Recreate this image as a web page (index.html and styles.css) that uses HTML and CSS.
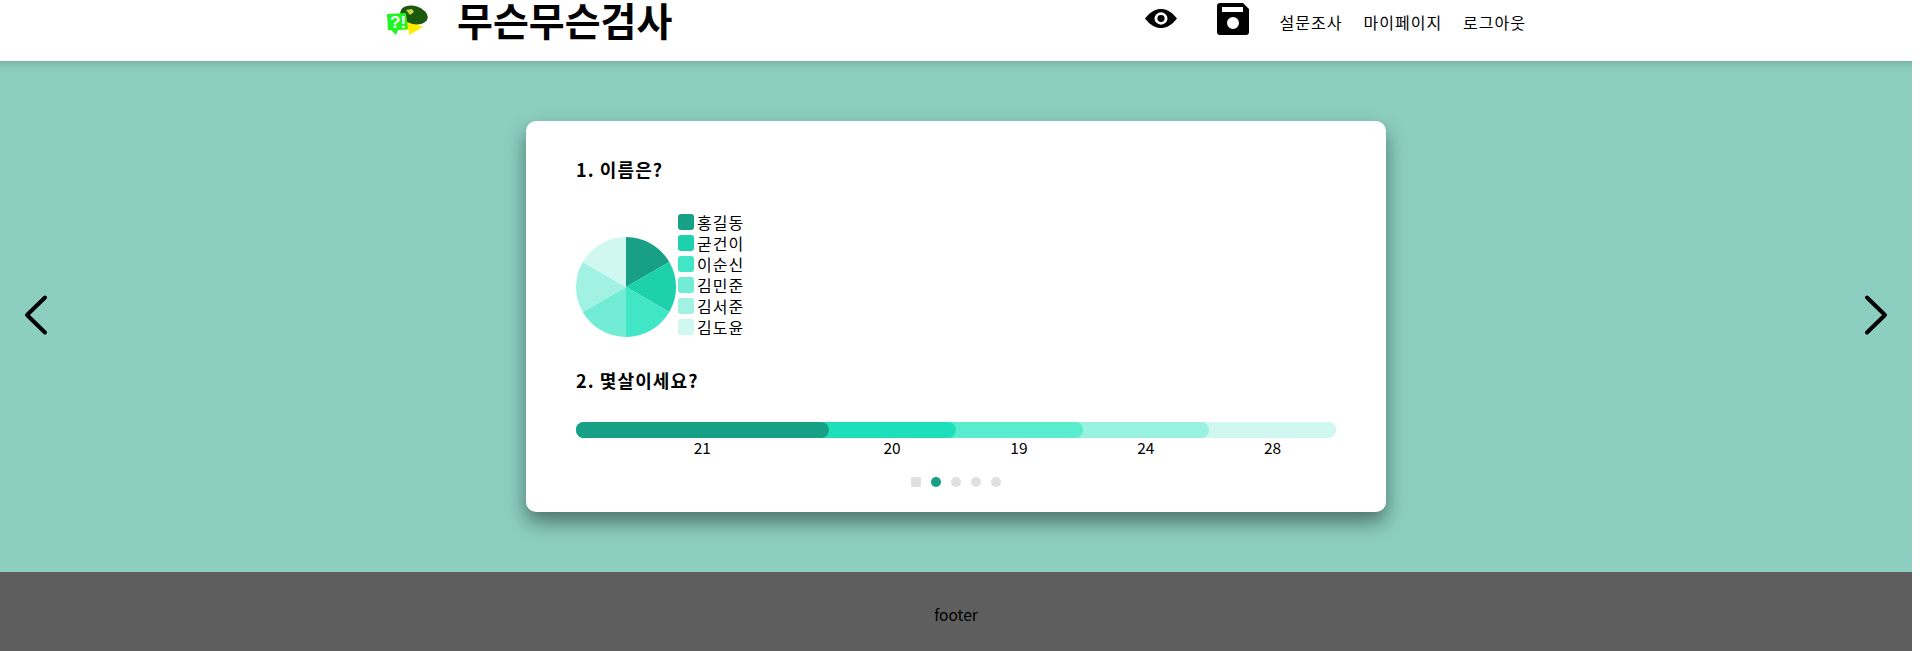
FILE: index.html
```html
<!DOCTYPE html>
<html>

<head>
    <meta charset="UTF-8">
    <title>무슨무슨검사</title>
    <link rel="stylesheet" href="styles.css">
</head>

<body>
    <div class="header">
        <div class="header_inner">
            <div class="logo">
                <svg class="logo_img" width="44" height="36" viewBox="0 0 44 36">
                    <path d="M14 13 L37 23 L23 31 L23 26 L14 26 Z" fill="#ffec00" />
                    <ellipse cx="28" cy="11" rx="14" ry="9" fill="#1b5a0e" transform="rotate(15 28 11)" />
                    <path d="M20 6 L26 5 L28 8 L24 11 Z" fill="#c9d84a" />
                    <path d="M1 10 L20 9 L22 25 L12 26 L10 31 L5 26 L2 26 Z" fill="#1ff51f" />
                    <text x="4" y="24" class="logo_mark">?!</text>
                </svg>
                <h1 class="title">무슨무슨검사</h1>
            </div>
            <div class="menu">
                <svg class="icon_eye" width="32" height="19" viewBox="0 0 32 20" preserveAspectRatio="none">
                    <path fill-rule="evenodd" d="M0 10 C6 2 11 0 16 0 C21 0 26 2 32 10 C26 18 21 20 16 20 C11 20 6 18 0 10 Z M16 3.500 A6.500 6.500 0 1 0 16 16.500 A6.500 6.500 0 1 0 16 3.500 Z" />
                    <circle cx="16" cy="10" r="3.600" />
                </svg>
                <svg class="icon_save" width="32" height="32" viewBox="0 0 32 32">
                    <path fill-rule="evenodd" d="M3 0 H26 L32 6 V29 A3 3 0 0 1 29 32 H3 A3 3 0 0 1 0 29 V3 A3 3 0 0 1 3 0 Z M5 4 V9 H26 V4 Z M16 14 A6 6 0 1 0 16 26 A6 6 0 1 0 16 14 Z" />
                </svg>
                <a class="link">설문조사</a>
                <a class="link">마이페이지</a>
                <a class="link">로그아웃</a>
            </div>
        </div>
    </div>

    <div class="main">
        <svg class="arrow" width="26" height="42" viewBox="0 0 26 42">
            <path d="M22 3.500 L4 21 L22 38.500" />
        </svg>
        <div class="card">
            <h3 class="question">1. 이름은?</h3>
            <div class="pie_box">
                <svg class="pie" width="100" height="100" viewBox="0 0 100 100">
                    <path d="M50 50 L50 0 A50 50 0 0 1 93.300 25 Z" fill="#17a085" />
                    <path d="M50 50 L93.300 25 A50 50 0 0 1 93.300 75 Z" fill="#1dd1ad" />
                    <path d="M50 50 L93.300 75 A50 50 0 0 1 50 100 Z" fill="#40e6c5" />
                    <path d="M50 50 L50 100 A50 50 0 0 1 6.700 75 Z" fill="#72ecd4" />
                    <path d="M50 50 L6.700 75 A50 50 0 0 1 6.700 25 Z" fill="#a1f2e2" />
                    <path d="M50 50 L6.700 25 A50 50 0 0 1 50 0 Z" fill="#d0f8f0" />
                </svg>
                <ul class="legend">
                    <li><span class="swatch c1"></span>홍길동</li>
                    <li><span class="swatch c2"></span>굳건이</li>
                    <li><span class="swatch c3"></span>이순신</li>
                    <li><span class="swatch c4"></span>김민준</li>
                    <li><span class="swatch c5"></span>김서준</li>
                    <li><span class="swatch c6"></span>김도윤</li>
                </ul>
            </div>
            <h3 class="question q2">2. 몇살이세요?</h3>
            <div class="bar">
                <div class="seg b5"></div>
                <div class="seg b4"></div>
                <div class="seg b3"></div>
                <div class="seg b2"></div>
                <div class="seg b1"></div>
            </div>
            <div class="bar_labels">
                <span class="first">21</span>
                <span>20</span>
                <span>19</span>
                <span>24</span>
                <span>28</span>
            </div>
            <div class="dots">
                <span class="dot square"></span>
                <span class="dot on"></span>
                <span class="dot"></span>
                <span class="dot"></span>
                <span class="dot"></span>
            </div>
        </div>
        <svg class="arrow" width="26" height="42" viewBox="0 0 26 42">
            <path d="M4 3.500 L22 21 L4 38.500" />
        </svg>
    </div>

    <div class="footer">footer</div>
</body>

</html>
```

FILE: styles.css
```css
* {
    padding: 0;
    margin: 0;
    box-sizing: border-box;
}

li {
    list-style: none;
}

html,
body {
    height: 651px;
    overflow: hidden;
}

body {
    width: 1912px;
    background: #fff;
    color: #000;
    font-family: "Noto Sans CJK KR", "Noto Sans", sans-serif;
    font-size: 16px;
}

.header {
    height: 61px;
    background: #fff;
}

.header_inner {
    display: flex;
    justify-content: space-between;
    width: 1140px;
    margin-left: 386px;
}

.logo {
    display: flex;
    align-items: flex-start;
}

.logo_img {
    margin-top: 4px;
}

.logo_mark {
    font-family: "Liberation Sans", sans-serif;
    font-size: 17px;
    font-weight: bold;
    fill: #fff;
}

.title {
    margin-left: 27px;
    font-family: "Liberation Sans", "Noto Sans CJK KR", sans-serif;
    font-size: 39px;
    line-height: 45px;
    font-weight: 700;
}

.menu {
    display: flex;
    align-items: flex-start;
}

.icon_eye {
    margin-top: 9px;
}

.icon_save {
    margin: 3px 10px 0 40px;
}

.link {
    margin: 11px 0 0 21px;
    font-size: 16px;
    line-height: 22px;
    letter-spacing: 1px;
}

.main {
    display: flex;
    align-items: center;
    justify-content: space-between;
    height: 511px;
    padding: 0 23px;
    background: #8ccfc1;
    box-shadow: inset 0 12px 12px -12px rgba(0, 0, 0, 0.25);
}

.card {
    width: 860px;
    height: 391px;
    padding: 35px 50px 0;
    background: #fff;
    border-radius: 10px;
    box-shadow: 0 10px 20px rgba(0, 0, 0, 0.45);
}

.question {
    font-size: 18px;
    line-height: 26px;
    font-weight: 700;
    letter-spacing: 1.100px;
}

.pie_box {
    display: flex;
    align-items: flex-start;
    margin-top: 27px;
}

.pie {
    margin-top: 28px;
}

.legend {
    margin: 3px 0 0 2px;
}

.legend li {
    display: flex;
    align-items: flex-start;
    height: 21px;
    font-size: 16px;
    line-height: 20px;
    letter-spacing: 1px;
}

.swatch {
    width: 16px;
    height: 16px;
    margin: 2px 3px 0 0;
    border-radius: 3px;
}

.c1 { background: #17a085; }
.c2 { background: #1dd1ad; }
.c3 { background: #40e6c5; }
.c4 { background: #72ecd4; }
.c5 { background: #a1f2e2; }
.c6 { background: #d0f8f0; }

.q2 {
    margin-top: 29px;
}

.bar {
    position: relative;
    height: 16px;
    margin-top: 29px;
    border-radius: 8px;
    background: #d0f8f0;
}

/* 겹쳐 그리기: 뒤 구간이 앞 구간 아래로 들어간다 */
.seg {
    position: absolute;
    top: 0;
    left: 0;
    height: 16px;
    border-radius: 8px;
}

.b1 { width: 253px; background: #17a085; }
.b2 { width: 380px; background: #1de0bb; }
.b3 { width: 507px; background: #5aeccf; }
.b4 { width: 633px; background: #98f2df; }
.b5 { width: 760px; background: #d0f8f0; }

.bar_labels {
    display: flex;
    height: 20px;
    font-size: 15.500px;
    line-height: 18px;
    text-align: center;
}

.bar_labels span {
    width: 127px;
}

.bar_labels .first {
    width: 253px;
}

.dots {
    display: flex;
    justify-content: center;
    gap: 10px;
    margin-top: 19px;
}

.dot {
    width: 10px;
    height: 10px;
    border-radius: 50%;
    background: #e0e0e0;
}

.square {
    border-radius: 0;
}

.on {
    background: #17a085;
}

.arrow {
    margin-bottom: 4px;
    fill: none;
    stroke: #000;
    stroke-width: 4;
    stroke-linecap: round;
    stroke-linejoin: round;
}

.footer {
    height: 79px;
    background: #5e5e5e;
    font-size: 15.500px;
    line-height: 84px;
    text-align: center;
}
```
